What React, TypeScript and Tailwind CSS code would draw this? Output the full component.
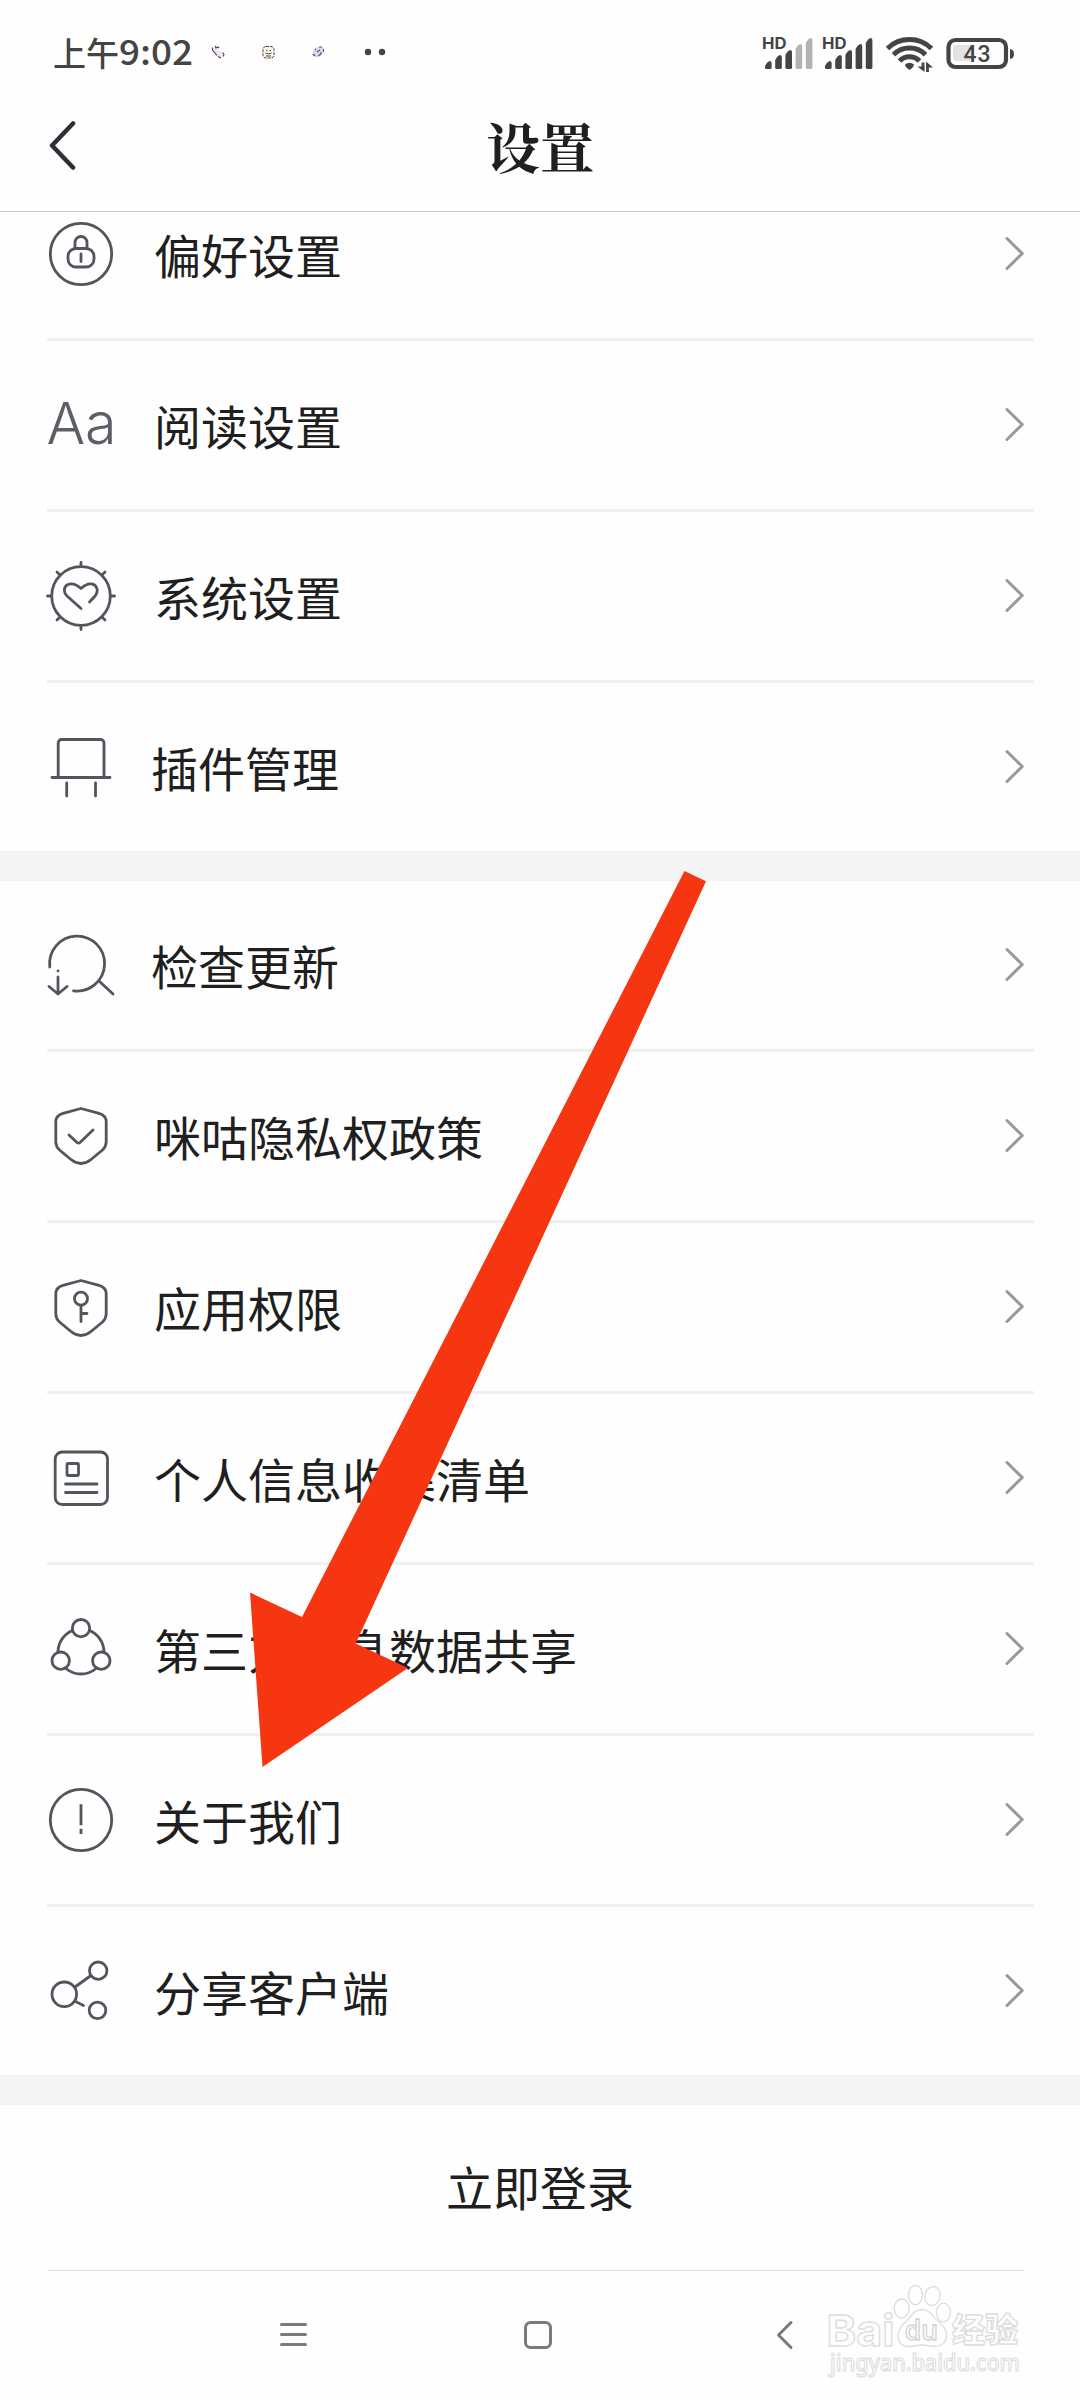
import type { ReactNode } from "react";

const Icon = ({ children }: { children: ReactNode }) => (
  <svg className="h-[72px] w-[72px] shrink-0" viewBox="0 0 72 72" fill="none" stroke="#50555e" strokeWidth="2.8" strokeLinecap="round" strokeLinejoin="round">
    {children}
  </svg>
);

const LockIcon = (
  <Icon>
    <circle cx="36" cy="36" r="30.7" />
    <rect x="23" y="30.5" width="26" height="18.5" rx="8" />
    <path d="M30 30V24.5a6 6 0 0 1 12 0V30M36 36v7.5" />
  </Icon>
);

const FontIcon = (
  <Icon>
    <text x="1.5 40" y="55" fontFamily="Inter, sans-serif" fontWeight="300" fontSize="57.5" fill="#5b6068" stroke="none">
      Aa
    </text>
  </Icon>
);

const GearIcon = (
  <Icon>
    <circle cx="36" cy="36" r="29.3" />
    <path d="M36 6V2.5M36 66v3.5M6 36H2.5M66 36h3.5M15 15l-3-3M57 15l3-3M15 57l-3 3M57 57l3 3" />
    <path d="M36 48.5 22 36C18.5 32.5 18.5 27.5 22 25C26 22.8 31 24 36 28.5C40.5 24 46 22.5 49.5 25C53 27.5 53 32 50.5 35.5L44.5 42" />
  </Icon>
);

const PlugIcon = (
  <Icon>
    <path d="M13.2 46V12a3.5 3.5 0 0 1 3.5-3.5H55.5a3.5 3.5 0 0 1 3.5 3.5V46M7 46.5H65M21.7 52V65M50.5 52V65" />
  </Icon>
);

const UpdateIcon = (
  <Icon>
    <path d="M4.8 38A27.5 27.5 0 1 1 28.5 61.8M54 52 68 65M13 48V64.5M4 57.5 13 65 22 57.5M13 41.8v.3" />
  </Icon>
);

const SHIELD = "M36 8.5L54 13.3Q61.2 15.3 61.2 22V42Q61.2 46.5 57.5 50L46 59.5Q36 67.5 26 59.5L14.5 50Q10.8 46.5 10.8 42V22Q10.8 15.3 18 13.3Z";

const ShieldCheckIcon = (
  <Icon>
    <path d={SHIELD} />
    <path d="M24 35 32 42.5Q33.5 43.8 35 42.5L48 30" />
  </Icon>
);

const ShieldKeyIcon = (
  <Icon>
    <path d={SHIELD} transform="translate(0 1)" />
    <circle cx="36" cy="27.7" r="6.5" />
    <path d="M36 34.5V50.5M36 42.5h6" />
  </Icon>
);

const CardIcon = (
  <Icon>
    <rect x="10.2" y="10" width="52.3" height="52.5" rx="7" />
    <rect x="22" y="21.5" width="11.5" height="12" rx="1" />
    <path d="M20.5 42H52M20.5 50.5H52" />
  </Icon>
);

const NetworkIcon = (
  <Icon>
    <circle cx="36" cy="15.2" r="8.7" />
    <circle cx="15.7" cy="47.7" r="8.7" />
    <circle cx="56.3" cy="47.7" r="8.7" />
    <path d="M27.5 17.5A23.5 23.5 0 0 0 13 38.5M44.5 17.5A23.5 23.5 0 0 1 59 38.5M21.5 56A23.5 23.5 0 0 0 50.5 56" />
  </Icon>
);

const AboutIcon = (
  <Icon>
    <circle cx="36" cy="36" r="30.7" />
    <path strokeLinecap="butt" d="M36 20.3V41.3M36 44.8V50" />
  </Icon>
);

const ShareIcon = (
  <Icon>
    <circle cx="19.3" cy="39.3" r="12.3" />
    <circle cx="53.2" cy="15.7" r="8.7" />
    <circle cx="52.5" cy="55.4" r="8.3" />
    <path d="M30 32 46 20.5M30 46.3 38.5 50.5" />
  </Icon>
);

type Item = { label: string; icon: ReactNode; tight?: boolean };

const GROUP_ONE: Item[] = [
  { label: "偏好设置", icon: LockIcon },
  { label: "阅读设置", icon: FontIcon },
  { label: "系统设置", icon: GearIcon },
  { label: "插件管理", icon: PlugIcon, tight: true },
];

const GROUP_TWO: Item[] = [
  { label: "检查更新", icon: UpdateIcon, tight: true },
  { label: "咪咕隐私权政策", icon: ShieldCheckIcon },
  { label: "应用权限", icon: ShieldKeyIcon },
  { label: "个人信息收集清单", icon: CardIcon },
  { label: "第三方信息数据共享", icon: NetworkIcon },
  { label: "关于我们", icon: AboutIcon },
  { label: "分享客户端", icon: ShareIcon },
];

const Group = ({ items }: { items: Item[] }) => (
  <ul className="flex flex-col">
    {items.map((item, i) => (
      <li key={item.label} className="flex flex-col">
        {i > 0 && <div className="mr-[46px] ml-[47px] h-[3px] bg-[#f0f0f0]" />}
        <div className="flex h-[168px] items-center pr-[53px] pl-[45px]">
          {item.icon}
          <span className={item.tight ? "ml-[34px] flex-1 pb-px text-[47px] leading-[72px]" : "ml-[37px] flex-1 pb-px text-[47px] leading-[72px]"}>
            {item.label}
          </span>
          <svg className="h-[36px] w-[24px]" viewBox="0 0 24 36" fill="none" stroke="#999" strokeWidth="3" strokeLinecap="round" strokeLinejoin="round">
            <path d="M4 2.5 19.3 17.5 4 32.5" />
          </svg>
        </div>
      </li>
    ))}
  </ul>
);

const Signal = ({ level }: { level: number }) => {
  const tops = [24, 18, 13, 7, 1];
  return (
    <svg className="h-[34px] w-[54px]" viewBox="-2 0 54 34">
      <text x="-1" y="12" fontFamily="Inter, sans-serif" fontWeight="700" fontSize="16" textLength="24.5" lengthAdjust="spacingAndGlyphs" fill="#444">
        HD
      </text>
      {tops.map((top, i) => {
        const x = 2 + i * 10.2;
        return (
          <path
            key={top}
            d={`M${x} ${top + 5.5}Q${x + 0.5} ${top + 2.5} ${x + 4.5} ${top}Q${x + 6.6} ${top} ${x + 6.6} ${top + 2}V30.500Q${x + 6.6} 32 ${x + 5} 32H${x + 1.5}Q${x} 32 ${x} 30.500Z`}
            fill={i < level ? "#444" : "#b3b3b3"}
          />
        );
      })}
    </svg>
  );
};

const StatusBar = () => (
  <div className="flex h-[104px] items-center pl-[53px] text-[#444]">
    <div className="flex w-[142px] items-center font-medium">
      <span className="text-[33px] leading-[48px]">上午</span>
      <svg className="h-[56px] w-[76px]" viewBox="0 0 76 56">
        <text x="0" y="41" textLength="74" lengthAdjust="spacingAndGlyphs" fontFamily="'Noto Sans CJK SC', sans-serif" fontSize="34.5" fontWeight="500" fill="#444">
          9:02
        </text>
      </svg>
    </div>
    <svg className="ml-[15px] h-[16px] w-[180px]" viewBox="0 0 180 16">
      <path d="M2.500 5L6 4L13.500 10L10 13.500L7 12Z" fill="#f1dffa" />
      <path d="M2.500 3.500V6L7 11.500M5 2l1 2 2-1 1 1M8 12.500l3 1.500M12.500 8.500l1.500 2-1 2" stroke="#444" strokeWidth="1.100" fill="none" />
      <rect x="53" y="2.500" width="11" height="11.500" rx="3" fill="#fff6ee" stroke="#444" strokeWidth="1" strokeDasharray="3 1" />
      <path d="M56 6l1.500 1M61 6l-1.500 1M55.500 9l3 1 3-1M56 12h5" stroke="#444" strokeWidth="1" fill="none" />
      <path d="M103 6.500L107 3H113L114 7L111 12L105 13.500L102.500 11Z" fill="#d5dcf2" />
      <path d="M103 10l2 2M105 6l1-1M109 3h3M113.500 5v3M107 8l3-2M108 12l3-2M110 9h2" stroke="#556" strokeWidth="1.100" />
      <circle cx="158" cy="8" r="3.200" fill="#444" />
      <circle cx="172" cy="8" r="3.200" fill="#444" />
    </svg>
    <div className="mt-[6px] ml-auto flex pr-[65px]">
      <Signal level={3} />
      <div className="w-[6px]" />
      <Signal level={5} />
      <svg className="-mt-px ml-[11px] h-[38px] w-[48px]" viewBox="0 0 48 38" fill="none" stroke="#444" strokeWidth="5">
        <path d="M1.500 12.500A31.500 31.500 0 0 1 45.500 12.500M7.500 18.700A22.500 22.500 0 0 1 39.500 18.700M13.500 25A14 14 0 0 1 33.500 25" />
        <path d="M19 28.500Q23.500 25 28 28.500Q28 31 23.500 34Q19 31 19 28.500Z" fill="#444" stroke="none" />
        <path d="M37 26.500V34M41.500 36V28" strokeWidth="2.800" />
        <path d="M31.500 30.500H38.400V36ZM47 31.500H40.100V25.500Z" fill="#444" stroke="none" />
      </svg>
      <svg className="ml-[12px] h-[34px] w-[69px]" viewBox="0 0 69 34">
        <rect x="2.500" y="3" width="57.500" height="27" rx="7" fill="none" stroke="#444" strokeWidth="4.200" />
        <path d="M10 8H28V24H10Q7 24 7 21V11Q7 8 10 8Z" fill="#e3e3e3" />
        <path d="M64 12Q68 12.500 68 17Q68 21.500 64 22Z" fill="#444" />
        <text x="31.500" y="24.500" textAnchor="middle" letterSpacing="1" fontFamily="Roboto, sans-serif" fontWeight="500" fontSize="23" fill="#444">
          43
        </text>
      </svg>
    </div>
  </div>
);

const Watermark = () => (
  <svg className="absolute right-[44px] bottom-[16px] h-[112px] w-[214px]" viewBox="822 2272 214 112" fill="#fefefe" stroke="#dcdcdc" strokeWidth="1.3">
    <ellipse cx="901.7" cy="2308.500" rx="7.5" ry="9.5" />
    <ellipse cx="915.5" cy="2295" rx="7" ry="9.7" />
    <ellipse cx="932.5" cy="2296" rx="7.5" ry="9.5" transform="rotate(12 932.5 2296)" />
    <ellipse cx="943.5" cy="2312.5" rx="7" ry="9.3" />
    <text x="826.5" y="2345.5" fontFamily="Inter, sans-serif" fontWeight="700" fontSize="43" textLength="68" lengthAdjust="spacingAndGlyphs">
      Bai
    </text>
    <path d="M922 2309.500C930 2309.500 932 2316 938 2321C943 2326 947 2329 946.500 2336C946 2343 941 2346.500 935 2346.500C930 2346.500 927 2345 922 2345C917 2345 914 2346.500 909 2346.500C902 2346.500 898 2342 898 2336C898 2329 902 2325 907 2320.500C912 2316 914 2309.500 922 2309.500Z" />
    <text x="921.5" y="2339.500" textAnchor="middle" fontFamily="'Open Sans', sans-serif" fontWeight="600" fontSize="26.500" stroke="#d2d2d2">
      du
    </text>
    <text x="952" y="2342" fontFamily="'Noto Sans CJK SC', sans-serif" fontWeight="900" fontSize="33">
      经验
    </text>
    <text x="830" y="2371" fontFamily="'Noto Sans', sans-serif" fontWeight="500" fontSize="23" textLength="190" lengthAdjust="spacingAndGlyphs" strokeWidth="1.1">
      jingyan.baidu.com
    </text>
  </svg>
);

export default function App() {
  return (
    <div className="relative flex h-[2400px] w-[1080px] flex-col overflow-hidden bg-[#fefefe] font-['Noto_Sans_CJK_SC',sans-serif] text-[#1f1f1f]">
      <header className="flex h-[212px] shrink-0 flex-col border-b border-[#c8c8c8]">
        <StatusBar />
        <div className="grid h-[88px] grid-cols-[200px_1fr_200px] items-center">
          <svg className="ml-[46px] h-[54px] w-[32px]" viewBox="0 0 32 54" fill="none" stroke="#2b2f36" strokeWidth="4.5" strokeLinecap="round" strokeLinejoin="round">
            <path d="M27 2.5 6 24.5 27 46.500" />
          </svg>
          <h1 className="pb-[5px] text-center font-['Noto_Serif_CJK_SC','Noto_Sans_CJK_SC',serif] text-[54px] leading-[80px] font-bold">设置</h1>
        </div>
      </header>

      <main className="flex flex-col">
        <div className="flex flex-col overflow-hidden">
          <div className="-mt-[42px]">
            <Group items={GROUP_ONE} />
          </div>
        </div>
        <div className="h-[30px] bg-[#f4f4f4]" />
        <Group items={GROUP_TWO} />
        <div className="h-[30px] bg-[#f4f4f4]" />
        <button className="h-[165px] text-center text-[47px] leading-[162px]">
          <span className="block h-[165px]">立即登录</span>
        </button>
        <div className="mr-[55px] ml-[47px] h-px bg-[#e2e2e2]" />
      </main>

      <nav className="flex h-[128px] items-center pl-[279px]">
        <svg className="h-[30px] w-[29px]" viewBox="0 0 29 30" stroke="#7a7a7a" strokeWidth="3" strokeLinecap="round">
          <path d="M2.500 4.500H26.500M2.500 14.500H26.500M2.500 24.500H26.500" />
        </svg>
        <svg className="ml-[215px] h-[30px] w-[30px]" viewBox="0 0 30 30" fill="none" stroke="#7a7a7a" strokeWidth="3">
          <rect x="2.500" y="2.500" width="25" height="25" rx="5" />
        </svg>
        <svg className="ml-[223px] h-[30px] w-[18px]" viewBox="0 0 18 30" fill="none" stroke="#7a7a7a" strokeWidth="3" strokeLinecap="round" strokeLinejoin="round">
          <path d="M15 2.500 2.500 15 15 27.500" />
        </svg>
      </nav>

      <Watermark />
      <svg className="pointer-events-none absolute top-[871px] left-[250px] h-[897px] w-[456px]" viewBox="0 0 456 897">
        <path d="M434.500 0 456 10.300 105.700 772.600 158 797 12.500 896 0 721.500 52 746Z" fill="#f63610" />
      </svg>
    </div>
  );
}
